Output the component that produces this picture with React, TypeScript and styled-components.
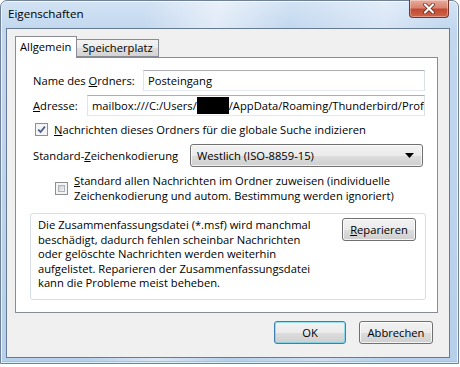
import React from 'react'
import styled, { createGlobalStyle } from 'styled-components'

const GlobalStyle = createGlobalStyle`
  html, body {
    margin: 0;
    padding: 0;
    background: #ffffff;
  }
  body {
    font-family: "Open Sans", "Noto Sans", sans-serif;
    font-size: 11.2px;
    color: #000;
  }
`

const Window = styled.div`
  width: 459px;
  height: 364px;
  box-sizing: border-box;
  border: 1px solid #6f8299;
  border-radius: 7px 7px 0 0;
  padding: 0 8px 5px 5px;
  display: flex;
  flex-direction: column;
  background:
    linear-gradient(100deg, rgba(255,255,255,0) 28%, rgba(255,255,255,0.5) 42%, rgba(255,255,255,0) 56%, rgba(255,255,255,0.35) 74%, rgba(255,255,255,0) 86%),
    linear-gradient(to bottom, #d3e3f4 0, #c3d8ef 27px, #b6cfea 100%);
  box-shadow: inset 0 0 0 1px rgba(255,255,255,0.7), inset 0 -2px 0 #7fd3ef;
`

const TitleBar = styled.div`
  height: 27px;
  display: flex;
  justify-content: space-between;
  align-items: flex-start;
`

const Title = styled.span`
  padding: 5px 0 0 2px;
  font-size: 11.6px;
  color: #000;
`

const CloseButton = styled.div`
  width: 40px;
  height: 18px;
  margin-top: -1px;
  margin-right: 1px;
  box-sizing: border-box;
  border: 1px solid #74362c;
  border-top: none;
  border-radius: 0 0 4px 4px;
  display: flex;
  align-items: center;
  justify-content: center;
  background: linear-gradient(to bottom, #e9ab9c 0, #d98471 45%, #c24a33 55%, #cf6548 100%);
  box-shadow: inset 0 0 0 1px rgba(255,255,255,0.35);
`

const Client = styled.div`
  flex: 1;
  border: 1px solid #667a90;
  background: #f0f0f0;
  padding: 7px 11px 0 8px;
  display: flex;
  flex-direction: column;
`

const TabRow = styled.div`
  display: flex;
  align-items: flex-end;
  height: 21px;
`

const Tab = styled.div<{ $active?: boolean }>`
  position: relative;
  z-index: 1;
  box-sizing: border-box;
  height: ${p => (p.$active ? 22 : 18)}px;
  margin-bottom: ${p => (p.$active ? -1 : 0)}px;
  margin-left: ${p => (p.$active ? 0 : -1)}px;
  padding: ${p => (p.$active ? '2px 5px 0 4px' : '0 5px 0 5px')};
  border: 1px solid #898c95;
  border-bottom: ${p => (p.$active ? 'none' : '1px solid #898c95')};
  background: ${p => (p.$active ? '#ffffff' : 'linear-gradient(to bottom, #f3f3f3 0, #ebebeb 50%, #dedede 51%, #d4d4d4 100%)')};
  line-height: 16px;
`

const Panel = styled.div`
  height: 256px;
  box-sizing: border-box;
  border: 1px solid #898c95;
  background: #ffffff;
  padding: 12px 12px 0 14px;
  display: flex;
  flex-direction: column;
`

const FieldRow = styled.div<{ $top?: number }>`
  display: flex;
  align-items: center;
  margin-left: 3px;
  margin-top: ${p => p.$top || 0}px;
`

const Label = styled.span<{ $width: number }>`
  width: ${p => p.$width}px;
  flex: none;
  white-space: nowrap;
`

const TextBox = styled.div`
  flex: 1;
  height: 21px;
  box-sizing: border-box;
  border: 1px solid;
  border-color: #abadb3 #dbdfe6 #e3e9ef #e2e3ea;
  padding: 0 4px;
  line-height: 19px;
  white-space: nowrap;
  overflow: hidden;
`

const Redacted = styled.span`
  display: inline-block;
  width: 32px;
  height: 17px;
  background: #000;
  vertical-align: middle;
  margin-top: -3px;
`

const CheckRow = styled.label<{ $indent: number; $top: number }>`
  display: flex;
  align-items: center;
  gap: 6px;
  margin-left: ${p => p.$indent}px;
  margin-top: ${p => p.$top}px;
  line-height: 15px;
`

const Box = styled.span`
  width: 13px;
  height: 13px;
  flex: none;
  box-sizing: border-box;
  border: 1px solid #8f8f8f;
  background: #f4f4f4;
  padding: 2px;
  display: flex;
`

const BoxInner = styled.span`
  flex: 1;
  border: 1px solid #aeb3b9;
  background: linear-gradient(135deg, #cbcfd5 0, #f3f3f3 100%);
`

const Select = styled.div`
  flex: 1;
  height: 23px;
  box-sizing: border-box;
  margin-right: 2px;
  border: 1px solid #707070;
  border-radius: 3px;
  padding: 0 8px 0 6px;
  display: flex;
  align-items: center;
  justify-content: space-between;
  background: linear-gradient(to bottom, #f2f2f2 0, #ebebeb 50%, #dddddd 51%, #cfcfcf 100%);
  box-shadow: inset 0 0 0 1px rgba(255,255,255,0.7);
`

const GroupBox = styled.div`
  margin-top: 10px;
  margin-right: -1px;
  height: 87px;
  box-sizing: border-box;
  border: 1px solid #d5dfe5;
  border-radius: 3px;
  padding: 4px 9px 0 7px;
  display: flex;
  justify-content: space-between;
  align-items: flex-start;
`

const GroupText = styled.p`
  margin: 0;
  line-height: 14.6px;
`

const Button = styled.button<{ $default?: boolean }>`
  width: ${p => (p.$default ? 72 : 74)}px;
  height: 23px;
  box-sizing: border-box;
  border: 1px solid ${p => (p.$default ? '#3c7fb1' : '#707070')};
  border-radius: 3px;
  padding: 0;
  font-family: inherit;
  font-size: 11.2px;
  color: #000;
  background: linear-gradient(to bottom, #f2f2f2 0, #ebebeb 50%, #dddddd 51%, #cfcfcf 100%);
  box-shadow: inset 0 0 0 1px ${p => (p.$default ? 'rgba(72,210,240,0.55)' : 'rgba(255,255,255,0.75)')};
`

const Footer = styled.div`
  display: flex;
  justify-content: flex-end;
  gap: 13px;
  margin-top: 8px;
  padding-right: 5px;
`

const Checkbox = ({ checked }: { checked?: boolean }) => (
  <Box>
    {checked ? (
      <svg width="9" height="9" viewBox="0 0 9 9" style={{ margin: '-1px' }}>
        <path d="M1.2 4.6 L3.6 7 L7.9 1.6" fill="none" stroke="#4c5f86" strokeWidth="1.8" />
      </svg>
    ) : (
      <BoxInner />
    )}
  </Box>
)

export default function App() {
  return (
    <>
      <GlobalStyle />
      <Window>
        <TitleBar>
          <Title>Eigenschaften</Title>
          <CloseButton>
            <svg width="14" height="11" viewBox="0 0 14 11">
              <path d="M3 1.5 L11 9.5 M11 1.5 L3 9.5" stroke="#5a2018" strokeWidth="3.6" strokeLinecap="round" />
              <path d="M3 1.5 L11 9.5 M11 1.5 L3 9.5" stroke="#ffffff" strokeWidth="2.2" strokeLinecap="round" />
            </svg>
          </CloseButton>
        </TitleBar>
        <Client>
          <TabRow>
            <Tab $active>Allgemein</Tab>
            <Tab>Speicherplatz</Tab>
          </TabRow>
          <Panel>
            <FieldRow>
              <Label $width={110}>Name des <u>O</u>rdners:</Label>
              <TextBox>Posteingang</TextBox>
            </FieldRow>
            <FieldRow $top={4}>
              <Label $width={54}><u>A</u>dresse:</Label>
              <TextBox>mailbox:///C:/Users/<Redacted />/AppData/Roaming/Thunderbird/Profiles/</TextBox>
            </FieldRow>
            <CheckRow $indent={5} $top={6}>
              <Checkbox checked />
              <span><u>N</u>achrichten dieses Ordners für die globale Suche indizieren</span>
            </CheckRow>
            <FieldRow $top={7}>
              <Label $width={157}>Standard-<u>Z</u>eichenkodierung</Label>
              <Select>
                <span>Westlich (ISO-8859-15)</span>
                <svg width="9" height="5" viewBox="0 0 9 5">
                  <path d="M0 0 H9 L4.5 5 Z" fill="#000" />
                </svg>
              </Select>
            </FieldRow>
            <CheckRow $indent={25} $top={6}>
              <Checkbox />
              <span><u>S</u>tandard allen Nachrichten im Ordner zuweisen (individuelle<br />Zeichenkodierung und autom. Bestimmung werden ignoriert)</span>
            </CheckRow>
            <GroupBox>
              <GroupText>
                Die Zusammenfassungsdatei (*.msf) wird manchmal<br />
                beschädigt, dadurch fehlen scheinbar Nachrichten<br />
                oder gelöschte Nachrichten werden weiterhin<br />
                aufgelistet. Reparieren der Zusammenfassungsdatei<br />
                kann die Probleme meist beheben.
              </GroupText>
              <Button><u>R</u>eparieren</Button>
            </GroupBox>
          </Panel>
          <Footer>
            <Button $default>OK</Button>
            <Button>Abbrechen</Button>
          </Footer>
        </Client>
      </Window>
    </>
  )
}
